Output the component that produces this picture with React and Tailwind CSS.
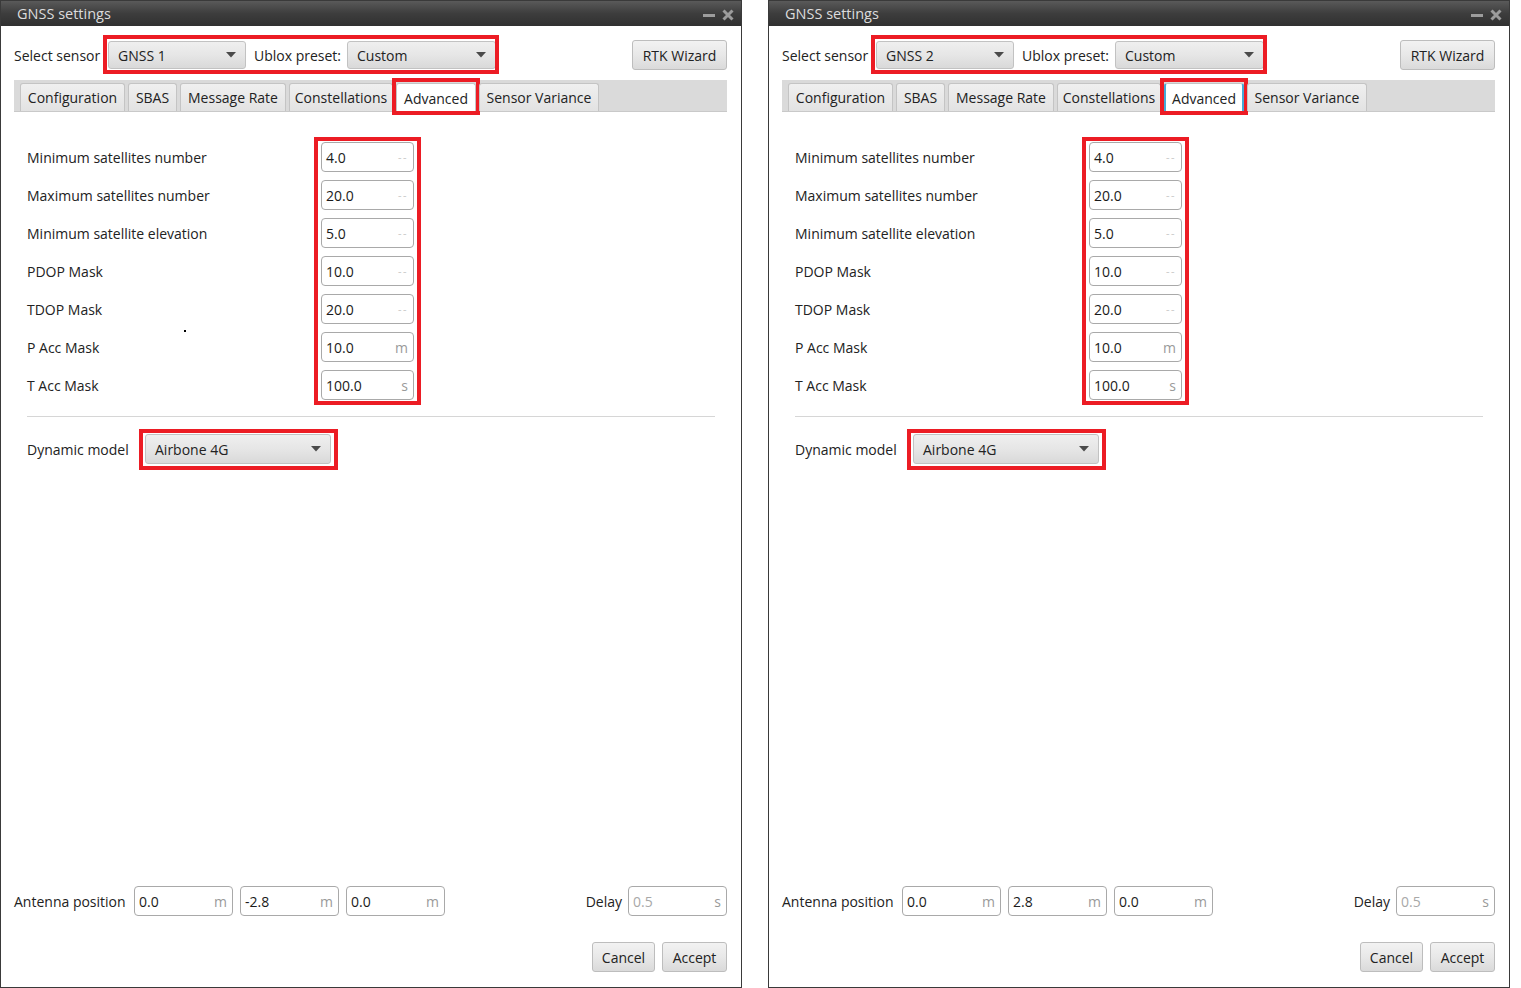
import React from "react";

const TABS = [
  { label: "Configuration", w: "w-[105px]" },
  { label: "SBAS", w: "w-[49px]" },
  { label: "Message Rate", w: "w-[106px]" },
  { label: "Constellations", w: "w-[104px]" },
  { label: "Advanced", w: "w-[80px]", active: true },
  { label: "Sensor Variance", w: "w-[120px]" },
];

const ROWS = [
  { label: "Minimum satellites number", value: "4.0", unit: "--" },
  { label: "Maximum satellites number", value: "20.0", unit: "--" },
  { label: "Minimum satellite elevation", value: "5.0", unit: "--" },
  { label: "PDOP Mask", value: "10.0", unit: "--" },
  { label: "TDOP Mask", value: "20.0", unit: "--" },
  { label: "P Acc Mask", value: "10.0", unit: "m" },
  { label: "T Acc Mask", value: "100.0", unit: "s" },
];

function Arrow() {
  return (
    <svg width="10" height="6" viewBox="0 0 10 6" className="shrink-0">
      <path d="M0 0H10L5 5.5Z" fill="#4a4a4a" />
    </svg>
  );
}

function Combo({ text, w }) {
  return (
    <div
      className={`flex h-[28px] ${w} items-center justify-between rounded-[3px] border border-[#c2c2c2] bg-gradient-to-b from-[#efefef] via-[#e6e6e6] to-[#d9d9d9] pl-[9px] pr-[9px] text-[14px] text-[#222]`}
    >
      <span>{text}</span>
      <Arrow />
    </div>
  );
}

function Button({ text, w }) {
  return (
    <div
      className={`flex h-[30px] ${w} items-center justify-center rounded-[3px] border border-[#bdbdbd] bg-gradient-to-b from-[#f2f2f2] via-[#e8e8e8] to-[#dadada] text-[14px] text-[#222]`}
    >
      {text}
    </div>
  );
}

function Field({ value, unit, w = "w-[93px]", disabled = false }) {
  return (
    <div
      className={`flex h-[30px] ${w} items-center justify-between rounded-[4px] border border-[#a9a9a9] bg-white pl-[4px] pr-[5px] text-[14px]`}
    >
      <span className={disabled ? "text-[#a8a8a8]" : "text-[#1a1a1a]"}>{value}</span>
      <span
        className={
          unit === "--"
            ? "text-[11px] tracking-[1.5px] text-[#c8c8c8]"
            : "text-[14px] text-[#9a9a9a]"
        }
      >
        {unit}
      </span>
    </div>
  );
}

function Window({ sensor, antenna, focusTab, dot }) {
  return (
    <div className="relative flex h-[988px] w-[742px] shrink-0 flex-col border border-[#3a3a3a] bg-white">
      {/* title bar */}
      <div className="flex h-[25px] items-center justify-between bg-gradient-to-b from-[#5a5a5a] via-[#3d3d3d] to-[#303030] pl-[16px] pr-[7px]">
        <span className="text-[14.5px] text-[#dcdcdc]">GNSS settings</span>
        <div className="flex items-center gap-[7px] pt-[2px]">
          <svg width="12" height="12" viewBox="0 0 12 12">
            <rect x="0" y="5" width="12" height="3" fill="#9c9c9c" />
          </svg>
          <svg width="12" height="12" viewBox="0 0 12 12">
            <path d="M1.5 1.5L10.5 10.5M10.5 1.5L1.5 10.5" stroke="#9c9c9c" strokeWidth="3" />
          </svg>
        </div>
      </div>

      <div className="relative flex flex-1 flex-col pl-[13px] pr-[14px]">
        {/* sensor selection */}
        <div className="mt-[14px] flex h-[30px] items-center text-[14px] text-[#222]">
          <span className="w-[94px]">Select sensor</span>
          <div className="relative flex items-center">
            <Combo text={sensor} w="w-[138px]" />
            <span className="ml-[8px] w-[93px]">Ublox preset:</span>
            <Combo text="Custom" w="w-[149px]" />
            <span className="pointer-events-none absolute -bottom-[5px] -left-[5px] -right-[3px] -top-[6px] border-4 border-[#ec1c24]" />
          </div>
          <div className="ml-auto">
            <Button text="RTK Wizard" w="w-[95px]" />
          </div>
        </div>

        {/* tabs */}
        <div className="mt-[10px] flex h-[32px] items-end gap-[3px] border-b border-[#c9c9c9] bg-[#dadada] pl-[6px]">
          {TABS.map((t) => (
            <div key={t.label} className={`relative h-[28px] ${t.w}`}>
              <div
                className={
                  t.active
                    ? `flex h-[29px] items-center justify-center rounded-t-[3px] border border-b-0 border-[#c4c4c4] bg-white text-[14px] text-[#222] ${focusTab ? "border-x-2 border-x-[#45a9d6]" : ""}`
                    : "flex h-[28px] items-center justify-center rounded-t-[3px] border border-b-0 border-[#c4c4c4] bg-gradient-to-b from-[#f0f0f0] to-[#e2e2e2] text-[14px] text-[#222]"
                }
              >
                {t.label}
              </div>
              {t.active && (
                <span className="pointer-events-none absolute -bottom-[4px] -left-[4px] -right-[4px] -top-[5px] border-4 border-[#ec1c24]" />
              )}
            </div>
          ))}
        </div>

        {/* advanced values */}
        <div className="mt-[30px] flex">
          <div className="flex w-[307px] flex-col gap-[8px] pl-[13px] text-[14px] text-[#222]">
            {ROWS.map((r) => (
              <div key={r.label} className="flex h-[30px] items-center">
                {r.label}
              </div>
            ))}
          </div>
          <div className="relative flex flex-col gap-[8px]">
            {ROWS.map((r) => (
              <Field key={r.label} value={r.value} unit={r.unit} />
            ))}
            <span className="pointer-events-none absolute -bottom-[5px] -left-[7px] -right-[7px] -top-[5px] border-4 border-[#ec1c24]" />
          </div>
        </div>
        {dot && <span className="absolute left-[183px] top-[304px] h-[2px] w-[2px] bg-black" />}

        <div className="ml-[13px] mr-[12px] mt-[16px] h-px bg-[#d6d6d6]" />

        {/* dynamic model */}
        <div className="mt-[17px] flex items-center pl-[13px] text-[14px] text-[#222]">
          <span className="w-[118px]">Dynamic model</span>
          <div className="relative">
            <div className="flex h-[30px] w-[186px] items-center justify-between rounded-[3px] border border-[#c2c2c2] bg-gradient-to-b from-[#efefef] via-[#e6e6e6] to-[#d9d9d9] pl-[9px] pr-[9px] text-[14px] text-[#222]">
              <span>Airbone 4G</span>
              <Arrow />
            </div>
            <span className="pointer-events-none absolute -bottom-[6px] -left-[6px] -right-[7px] -top-[5px] border-4 border-[#ec1c24]" />
          </div>
        </div>

        <div className="flex-1" />

        {/* antenna + delay */}
        <div className="flex items-center text-[14px] text-[#222]">
          <span className="w-[120px]">Antenna position</span>
          <div className="flex gap-[7px]">
            <Field value="0.0" unit="m" w="w-[99px]" />
            <Field value={antenna} unit="m" w="w-[99px]" />
            <Field value="0.0" unit="m" w="w-[99px]" />
          </div>
          <div className="ml-auto flex items-center gap-[6px]">
            <span>Delay</span>
            <Field value="0.5" unit="s" w="w-[99px]" disabled />
          </div>
        </div>

        <div className="mb-[15px] mt-[26px] flex justify-end gap-[7px]">
          <Button text="Cancel" w="w-[63px]" />
          <Button text="Accept" w="w-[65px]" />
        </div>
      </div>
    </div>
  );
}

export default function App() {
  return (
    <div className="flex h-[988px] w-[1521px] gap-[26px] overflow-hidden bg-white font-['Open_Sans','Noto_Sans',sans-serif]">
      <Window sensor="GNSS 1" antenna="-2.8" dot />
      <Window sensor="GNSS 2" antenna="2.8" focusTab />
    </div>
  );
}
